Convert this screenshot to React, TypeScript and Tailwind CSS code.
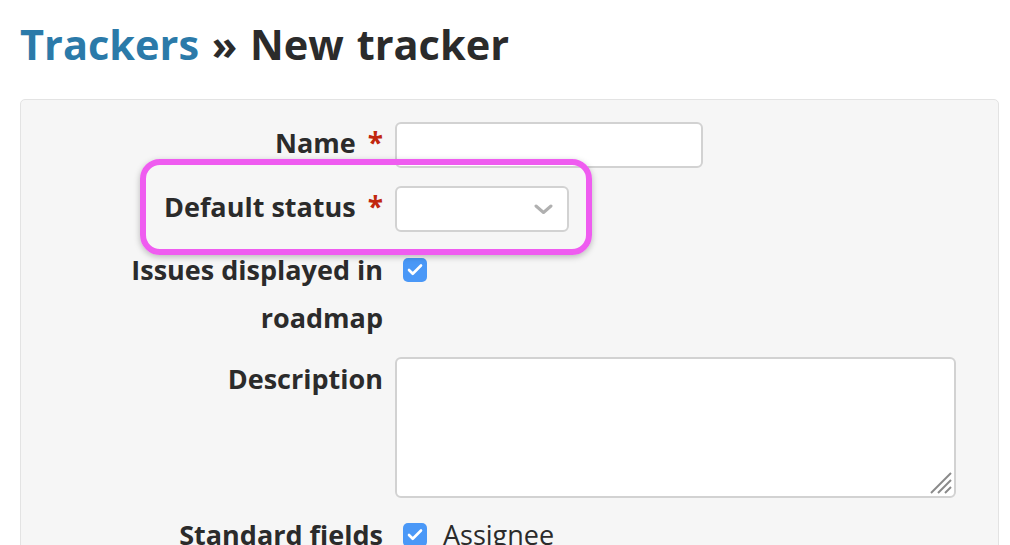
import { Check } from "lucide-react";

function Tick() {
  return (
    <span className="inline-flex h-[24px] w-[24px] items-center justify-center rounded-[5px] bg-[#4a98f7]">
      <Check className="h-[18px] w-[18px] text-white" strokeWidth={3.5} />
    </span>
  );
}

function Req() {
  return <span className="ml-[12px] text-[28px] text-[#c1270e]">*</span>;
}

export default function App() {
  return (
    <div className="h-[545px] overflow-hidden bg-white pl-[20px] pr-[11px] text-[#2b2b2b]" style={{ fontFamily: '"Open Sans", "Noto Sans", sans-serif' }}>
      <h2 className="pt-[16px] text-[41.5px] font-bold leading-[56px] [word-spacing:2px]">
        <span className="text-[#2b7aa9]">Trackers</span> » New tracker
      </h2>

      <div className="relative mt-[27px] rounded-[5px] border border-[#e3e3e3] bg-[#f6f6f6] pt-[22px] pb-[40px] text-[27px] font-bold">
        {/* highlight around default status */}
        <div className="pointer-events-none absolute left-[119px] top-[59px] h-[96px] w-[452px] rounded-[20px] border-[6px] border-[#ef5cf0] shadow-[0_2px_6px_rgba(0,0,0,0.25)]" />

        <div className="flex items-start">
          <label className="w-[362px] text-right leading-[40px]">
            Name<Req />
          </label>
          <input type="text" className="ml-[12px] h-[46px] w-[308px] rounded-[6px] border-2 border-[#d2d2d2] bg-white outline-none" />
        </div>

        <div className="mt-[18px] flex items-start">
          <label className="w-[362px] text-right leading-[40px]">
            Default status<Req />
          </label>
          <div className="relative ml-[12px] h-[46px] w-[174px] rounded-[6px] border-2 border-[#d2d2d2] bg-white">
            <svg className="absolute right-[14px] top-[16px]" width="19" height="11" viewBox="0 0 19 11">
              <polyline points="2,2 9.5,8.5 17,2" fill="none" stroke="#b0b0b0" strokeWidth="3" strokeLinecap="round" strokeLinejoin="round" />
            </svg>
          </div>
        </div>

        <div className="mt-[14px] flex items-start">
          <label className="w-[362px] text-right leading-[48px]">
            Issues displayed in
            <br />
            roadmap
          </label>
          <div className="ml-[20px] flex h-[48px] items-center">
            <Tick />
          </div>
        </div>

        <div className="mt-[15px] flex items-start">
          <label className="w-[362px] text-right leading-[44px]">Description</label>
          <div className="relative ml-[12px] h-[141px] w-[561px] rounded-[6px] border-2 border-[#d2d2d2] bg-white">
            <svg className="absolute bottom-[2px] right-[2px]" width="22" height="22" viewBox="0 0 22 22">
              <line x1="21" y1="1" x2="1" y2="21" stroke="#8a8a8a" strokeWidth="2" />
              <line x1="21" y1="8" x2="8" y2="21" stroke="#8a8a8a" strokeWidth="2" />
              <line x1="21" y1="15" x2="15" y2="21" stroke="#8a8a8a" strokeWidth="2" />
            </svg>
          </div>
        </div>

        <div className="mt-[13px] flex items-start">
          <label className="w-[362px] text-right leading-[48px]">Standard fields</label>
          <div className="ml-[20px] flex h-[48px] items-center gap-[16px] font-normal">
            <Tick />
            <span>Assignee</span>
          </div>
        </div>
      </div>
    </div>
  );
}
